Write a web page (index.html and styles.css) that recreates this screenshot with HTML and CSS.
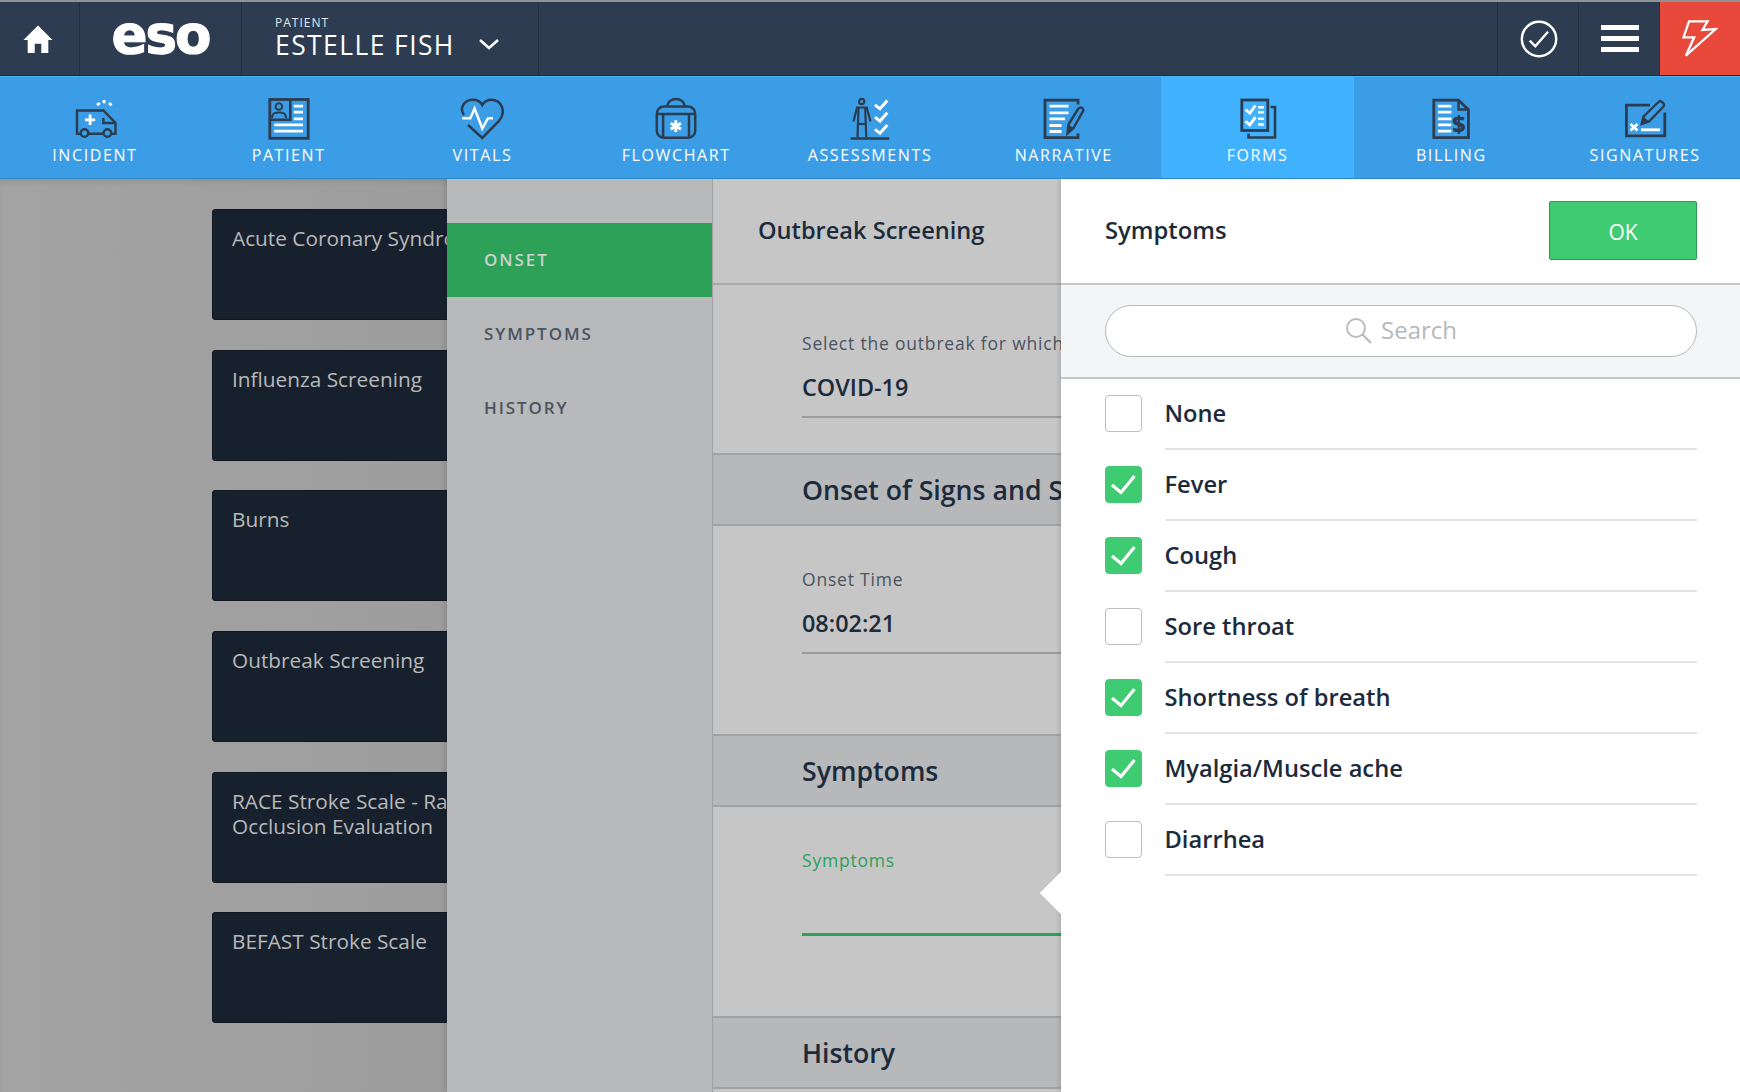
FILE: index.html
```html
<!DOCTYPE html>
<html lang="en">
<head>
<meta charset="utf-8">
<title>ESO - Forms</title>
<link rel="stylesheet" href="styles.css">
</head>
<body>
<div class="app">
  <header class="topbar">
    <div class="cell cell-home">
      <svg class="home-icon" viewBox="0 0 32 32"><path d="M16 1.5 L31.5 17 H27 V31 H19.5 V21 H12.5 V31 H5 V17 H0.5 Z" fill="#fff"/></svg>
    </div>
    <div class="cell cell-logo"><span class="logo">eso</span></div>
    <div class="cell cell-patient">
      <div class="patient-text">
        <div class="patient-label">PATIENT</div>
        <div class="patient-name">ESTELLE FISH</div>
      </div>
      <svg class="chevron" viewBox="0 0 22 12"><path d="M2 2 L11 10 L20 2" fill="none" stroke="#fff" stroke-width="2.6"/></svg>
    </div>
    <div class="top-spacer"></div>
    <div class="cell cell-action">
      <svg class="check-icon" viewBox="0 0 40 40"><circle cx="20" cy="20" r="17.2" fill="none" stroke="#fff" stroke-width="2.4"/><path d="M10.7 21.7 L16.3 27.3 L29 12.7" fill="none" stroke="#fff" stroke-width="2.4"/></svg>
    </div>
    <div class="cell cell-action">
      <div class="burger"><span></span><span></span><span></span></div>
    </div>
    <div class="cell-alert">
      <svg class="bolt" viewBox="0 0 36 40"><path d="M7 2.3 H25.5 L20.5 11 L33.8 10 L3.8 36.7 L12.2 18.3 H1.5 Z" fill="none" stroke="#fff" stroke-width="2.3"/></svg>
    </div>
  </header>

  <nav class="nav">
    <a class="nav-item">
      <svg class="nav-icon" viewBox="0 0 44 44"><g fill="none" stroke="#2c3c50" stroke-width="2.4"><path d="M4 13.5 H30.4 L42.5 26 V36.8 H4 Z"/><path d="M30.4 21 V26 H41"/><circle cx="11.5" cy="36" r="3.8" fill="#3a9de6"/><circle cx="34.4" cy="36" r="3.8" fill="#3a9de6"/></g><path d="M17.1 17.5 V28 M12 22.8 H22.2" stroke="#fff" stroke-width="2.8"/><path d="M24 8.2 L26.8 6 M31 6.2 V3 M36 6 L38.6 8.2" stroke="#fff" stroke-width="2.8"/></svg>
      <span>INCIDENT</span>
    </a>
    <a class="nav-item">
      <svg class="nav-icon" viewBox="0 0 44 44"><rect x="2.8" y="2.5" width="38.4" height="38.8" fill="none" stroke="#2c3c50" stroke-width="2.8"/><path d="M3 22.8 H23.3 V3" fill="none" stroke="#2c3c50" stroke-width="2.6"/><circle cx="11.9" cy="9.5" r="3.3" fill="none" stroke="#2c3c50" stroke-width="2"/><path d="M5 21 C5 15.5 9 15.5 12 15.5 C15 15.5 19 15.5 19 21" fill="none" stroke="#2c3c50" stroke-width="2"/><path d="M26.7 9.2 H36 M26.7 15.2 H36 M26.7 21.8 H36 M7.3 27.8 H36 M7.3 34.2 H36" stroke="#fff" stroke-width="2.8"/></svg>
      <span>PATIENT</span>
    </a>
    <a class="nav-item">
      <svg class="nav-icon" viewBox="0 0 44 44"><path d="M8 28 L22.3 41 L39 24 C47 14 41 2.8 31.5 2.8 C27 2.8 24 5 22.3 8 C20.5 5 17 2.8 13 2.8 C4 2.8 -1 11 4 18" fill="none" stroke="#2c3c50" stroke-width="2.5"/><path d="M2.3 21.2 H10.3 L14.6 11.5 L22.3 31.5 L28 21.2 H33" fill="none" stroke="#fff" stroke-width="2.5"/></svg>
      <span>VITALS</span>
    </a>
    <a class="nav-item">
      <svg class="nav-icon" viewBox="0 0 44 44"><g fill="none" stroke="#2c3c50" stroke-width="2.5"><rect x="2.8" y="9.5" width="38.4" height="31.2" rx="7"/><path d="M13.5 9.5 C13.5 -0.5 30.5 -0.5 30.5 9.5"/><path d="M3 17 H41"/><path d="M9.1 17 V40 M35 17 V40"/></g><path d="M21.8 23.3 V35.1 M16.7 26.3 L26.9 32.1 M26.9 26.3 L16.7 32.1" stroke="#fff" stroke-width="3"/></svg>
      <span>FLOWCHART</span>
    </a>
    <a class="nav-item">
      <svg class="nav-icon" viewBox="0 0 44 44"><g fill="none" stroke="#2c3c50" stroke-width="2.2"><circle cx="13.7" cy="4.5" r="2.6"/><path d="M5.5 24.5 L9 10.5 H18.7 L22.5 24.5"/><path d="M10.5 11 L9.5 40 M17.2 11 L18.2 40"/><path d="M10.5 27 H17.2"/></g><path d="M2.7 41.5 H41.3" stroke="#2c3c50" stroke-width="2.6"/><path d="M27 7.8 L32 11.8 L39.3 3.5 M27 20.1 L32 24.1 L39.3 15.8 M27 32.3 L32 36.3 L39.3 28" fill="none" stroke="#fff" stroke-width="3"/></svg>
      <span>ASSESSMENTS</span>
    </a>
    <a class="nav-item">
      <svg class="nav-icon" viewBox="0 0 44 44"><path d="M36 7.5 V3.2 H3 V40.6 H36 V36.5" fill="none" stroke="#2c3c50" stroke-width="2.8"/><path d="M7.5 9.2 H26.5 M7.5 15.8 H26.5 M7.5 21.8 H23 M7.5 28.5 H19.5 M7.5 34.5 H19.5" stroke="#fff" stroke-width="2.8"/><path d="M25.5 36.5 L26.5 27.5 L36 12 C38 9 42.5 11 41 14.2 L31.5 31 Z" fill="#3a9de6" stroke="#2c3c50" stroke-width="2.4"/><path d="M25.5 36.5 L26.5 27.5 L31.5 31 Z" fill="#2c3c50"/></svg>
      <span>NARRATIVE</span>
    </a>
    <a class="nav-item nav-item-active">
      <svg class="nav-icon" viewBox="0 0 44 44"><rect x="5.8" y="3" width="26" height="30.5" fill="none" stroke="#2c3c50" stroke-width="2.8"/><path d="M34.5 10 H39 V40.5 H12.5 V36.5" fill="none" stroke="#2c3c50" stroke-width="2.6"/><path d="M9.5 12.5 L13.8 16.2 L19.5 8.5 M9.5 24.2 L13.8 27.9 L19.5 20.2" fill="none" stroke="#fff" stroke-width="2.8"/><path d="M22.2 10.2 H27.8 M22.2 15.2 H27.8 M22.2 21.8 H27.8 M22.2 27.5 H27.8" stroke="#fff" stroke-width="2.4"/></svg>
      <span>FORMS</span>
    </a>
    <a class="nav-item">
      <svg class="nav-icon" viewBox="0 0 44 44"><path d="M4.8 3.2 H29.5 L39.4 12.5 V40.6 H4.8 Z" fill="none" stroke="#2c3c50" stroke-width="2.8"/><path d="M29.5 3 V12.5 H39.5" fill="none" stroke="#2c3c50" stroke-width="2.4"/><path d="M9 9.2 H22.4 M9 15.2 H22.4 M9 21.8 H22.4 M9 27.8 H22.4 M9 34.2 H22.4" stroke="#fff" stroke-width="2.8"/><text class="dollar" x="30.7" y="35.5" text-anchor="middle">$</text></svg>
      <span>BILLING</span>
    </a>
    <a class="nav-item">
      <svg class="nav-icon" viewBox="0 0 44 44"><path d="M27 8.2 H3.4 V38.8 H41.8 V15.5" fill="none" stroke="#2c3c50" stroke-width="2.8"/><path d="M18.7 27 L20.5 19.5 L35.5 5 C37.5 3 42.5 6.5 40.5 9.5 L26 24.5 Z" fill="#3a9de6" stroke="#2c3c50" stroke-width="2.4"/><path d="M18.7 27 L20.5 19.5 L26 24.5 Z" fill="#2c3c50"/><path d="M7.5 27 L14.5 33.5 M14.5 27 L7.5 33.5" stroke="#fff" stroke-width="2.8"/><path d="M18 32.8 H37" stroke="#fff" stroke-width="2.8"/></svg>
      <span>SIGNATURES</span>
    </a>
  </nav>

  <main class="main">
    <section class="cards">
      <div class="card">Acute Coronary Syndrome</div>
      <div class="card">Influenza Screening</div>
      <div class="card">Burns</div>
      <div class="card">Outbreak Screening</div>
      <div class="card">RACE Stroke Scale - Rapid Arterial Occlusion Evaluation</div>
      <div class="card">BEFAST Stroke Scale</div>
    </section>

    <aside class="steps">
      <div class="step step-active">ONSET</div>
      <div class="step">SYMPTOMS</div>
      <div class="step">HISTORY</div>
    </aside>

    <section class="form">
      <h1 class="form-title">Outbreak Screening</h1>
      <div class="field-block field-block-first">
        <div class="field">
          <div class="field-label">Select the outbreak for which this patient is being screened</div>
          <div class="field-value">COVID-19</div>
        </div>
      </div>
      <h2 class="section-title">Onset of Signs and Symptoms</h2>
      <div class="field-block">
        <div class="field">
          <div class="field-label">Onset Time</div>
          <div class="field-value">08:02:21</div>
        </div>
      </div>
      <h2 class="section-title">Symptoms</h2>
      <div class="field-block">
        <div class="field field-focus">
          <div class="field-label">Symptoms</div>
          <div class="field-value">&nbsp;</div>
        </div>
      </div>
      <h2 class="section-title">History</h2>
    </section>

    <section class="panel">
      <div class="panel-arrow"></div>
      <div class="panel-head">
        <h2 class="panel-title">Symptoms</h2>
        <button class="ok-btn">OK</button>
      </div>
      <div class="search-band">
        <div class="search">
          <svg class="search-icon" viewBox="0 0 28 28"><circle cx="11" cy="11" r="9" fill="none" stroke="#b9bcbe" stroke-width="2"/><path d="M17.5 17.5 L26 26" stroke="#b9bcbe" stroke-width="2.2"/></svg>
          <span class="search-text">Search</span>
        </div>
      </div>
      <ul class="options">
        <li class="option"><span class="box"></span><span class="option-text">None</span></li>
        <li class="option"><span class="box box-on"><svg viewBox="0 0 37 37"><path d="M7 19 L16 26.5 L29.5 10" fill="none" stroke="#fff" stroke-width="3.2"/></svg></span><span class="option-text">Fever</span></li>
        <li class="option"><span class="box box-on"><svg viewBox="0 0 37 37"><path d="M7 19 L16 26.5 L29.5 10" fill="none" stroke="#fff" stroke-width="3.2"/></svg></span><span class="option-text">Cough</span></li>
        <li class="option"><span class="box"></span><span class="option-text">Sore throat</span></li>
        <li class="option"><span class="box box-on"><svg viewBox="0 0 37 37"><path d="M7 19 L16 26.5 L29.5 10" fill="none" stroke="#fff" stroke-width="3.2"/></svg></span><span class="option-text">Shortness of breath</span></li>
        <li class="option"><span class="box box-on"><svg viewBox="0 0 37 37"><path d="M7 19 L16 26.5 L29.5 10" fill="none" stroke="#fff" stroke-width="3.2"/></svg></span><span class="option-text">Myalgia/Muscle ache</span></li>
        <li class="option"><span class="box"></span><span class="option-text">Diarrhea</span></li>
      </ul>
    </section>
  </main>
</div>
</body>
</html>
```

FILE: styles.css
```css
* { box-sizing: border-box; }
html, body { margin: 0; padding: 0; height: 100%; }
body { font-family: "Open Sans", "Liberation Sans", sans-serif; color: #1c2b3c; overflow: hidden; }
.app { width: 1740px; height: 1092px; display: flex; flex-direction: column; overflow: hidden; }
h1, h2, ul { margin: 0; padding: 0; }

/* top bar */
.topbar { flex: 0 0 76px; display: flex; background: #2d3c50; border-top: 2px solid #8f9296; border-bottom: 1px solid #1f2b3a; color: #fff; }
.cell { display: flex; align-items: center; justify-content: center; border-right: 1px solid #223040; }
.cell-home { width: 80px; padding-right: 3px; }
.home-icon { width: 30px; height: 30px; }
.cell-logo { width: 162px; }
.logo { font-family: "DejaVu Sans", sans-serif; font-weight: 700; font-size: 53px; line-height: 1; letter-spacing: -2px; -webkit-text-stroke: 1.2px #fff; margin-top: -8px; }
.cell-patient { width: 297px; justify-content: flex-start; padding-left: 33px; gap: 23px; }
.patient-text { padding-bottom: 2px; }
.patient-label { font-size: 12px; line-height: 14px; letter-spacing: 1px; color: #e4e7ea; }
.patient-name { font-size: 26.5px; line-height: 30px; letter-spacing: 1.4px; font-weight: 400; }
.chevron { width: 22px; height: 12px; margin-top: 11px; }
.top-spacer { flex: 1; border-right: 1px solid #223040; }
.cell-action { width: 81px; padding-left: 2px; }
.check-icon { width: 40px; height: 40px; }
.burger { width: 38px; display: flex; flex-direction: column; gap: 6px; }
.burger span { display: block; height: 5px; background: #fff; }
.cell-alert { width: 80px; background: #e9493a; display: flex; align-items: center; justify-content: center; }
.bolt { width: 36px; height: 40px; }

/* nav */
.nav { flex: 0 0 103px; display: grid; grid-template-columns: repeat(9, 1fr); margin: 0 -2px; background: #3a9de6; border-top: 1px solid #49b4f2; border-bottom: 1px solid #2b85c7; }
.nav-item { display: flex; flex-direction: column; align-items: center; padding-top: 20px; gap: 3px; color: #fff; font-size: 16px; line-height: 22px; letter-spacing: 1.6px; }
.nav-item-active { background: #41b2ff; }
.nav-icon { width: 44px; height: 44px; flex: none; }
.dollar { font-family: "Open Sans", sans-serif; font-size: 23px; font-weight: 800; fill: #2c3c50; }

/* main */
.main { flex: 1; display: flex; position: relative; min-height: 0; overflow: hidden; }
.cards { flex: 0 0 447px; background: linear-gradient(90deg, #a3a3a3 0, #a1a1a1 40%, #9d9d9d 100%); padding: 30px 0 0 212px; display: flex; flex-direction: column; gap: 29.7px; overflow: hidden; box-shadow: inset 0 6px 8px -6px rgba(0,0,0,.18); }
.card { flex: 0 0 111px; width: 400px; background: #17212e; border: 1px solid #10171f; border-radius: 3px; padding: 16px 19px; color: #b9b9b9; font-size: 20.8px; line-height: 25.5px; }

.steps { flex: 0 0 266px; background: #b7b9bb; border-right: 1px solid #a0a2a4; padding-top: 44px; box-shadow: -3px 0 5px rgba(0,0,0,.1); position: relative; }
.step { height: 74px; display: flex; align-items: center; padding: 0 0 2px 37px; font-size: 17px; font-weight: 600; letter-spacing: 1.9px; color: #4a5461; }
.step-active { background: #2da158; color: #c9d2cc; }

.form { flex: 1; min-width: 0; background: #c6c6c6; overflow: hidden; }
.form-title { height: 106px; display: flex; align-items: center; padding: 0 0 2px 45px; font-size: 23.6px; font-weight: 600; color: #1c2b3c; border-bottom: 2px solid #a7a9ab; }
.field-block { height: 208.3px; padding: 41px 0 0 89px; }
.field-block-first { height: 168px; padding-top: 46px; }
.field { border-bottom: 2px solid #9a9c9e; height: 87px; }
.field-label { font-size: 17.5px; line-height: 24px; letter-spacing: .8px; color: #4a5461; white-space: nowrap; }
.field-value { margin-top: 17px; font-size: 23.4px; line-height: 30px; font-weight: 600; color: #1c2b3c; }
.field-focus { border-bottom: 3px solid #2da158; height: 88px; }
.field-focus .field-label { color: #2da158; }
.section-title { height: 73px; display: flex; align-items: center; padding-left: 89px; font-size: 26.7px; font-weight: 600; background: #b6b8ba; border-top: 2px solid #a0a2a4; border-bottom: 2px solid #a0a2a4; white-space: nowrap; }

/* overlay panel */
.panel { position: absolute; top: 0; right: 0; bottom: 0; width: 679px; background: #fff; box-shadow: -2px 0 4px rgba(0,0,0,.12); }
.panel-arrow { position: absolute; left: -21px; top: 693px; width: 42px; height: 42px; }
.panel-arrow::before { content: ""; position: absolute; left: 6px; top: 6px; width: 30px; height: 30px; background: #fff; transform: rotate(45deg); }
.panel-head { height: 106px; display: flex; align-items: center; justify-content: space-between; padding: 0 43px 2px 44px; border-bottom: 2px solid #c3c7c9; position: relative; }
.panel-title { font-size: 23.8px; font-weight: 600; color: #1c2b3c; }
.ok-btn { width: 148px; height: 59px; padding-top: 4px; background: #3ecb72; border: 1px solid #2b9a55; border-radius: 2px; color: #fff; font-family: inherit; font-size: 21px; }
.search-band { height: 94px; padding: 20px 43px 0 44px; background: #f3f5f6; border-bottom: 2px solid #c3c7c9; position: relative; }
.search { height: 52px; border: 1.5px solid #b5b9bb; border-radius: 26px; background: #fff; display: flex; align-items: center; justify-content: center; gap: 8px; color: #b5b9bb; font-size: 24px; }
.search-icon { width: 28px; height: 28px; }
.search-text { margin-top: -4px; }
.options { list-style: none; position: relative; background: #fff; }
.option { height: 71px; display: flex; align-items: center; padding-left: 44px; padding-right: 43px; }
.box { flex: none; width: 37px; height: 37px; margin-top: -2px; border: 1.5px solid #b9bec2; border-radius: 4px; background: #fff; overflow: hidden; }
.box svg { display: block; width: 37px; height: 37px; margin: -1.5px; }
.box-on { background: #3ecb72; border-color: #3ecb72; }
.option-text { flex: 1; height: 71px; margin-left: 22.5px; padding-bottom: 2px; display: flex; align-items: center; font-size: 23.7px; font-weight: 600; color: #1c2b3c; border-bottom: 2px solid #e2e5e7; }
```
